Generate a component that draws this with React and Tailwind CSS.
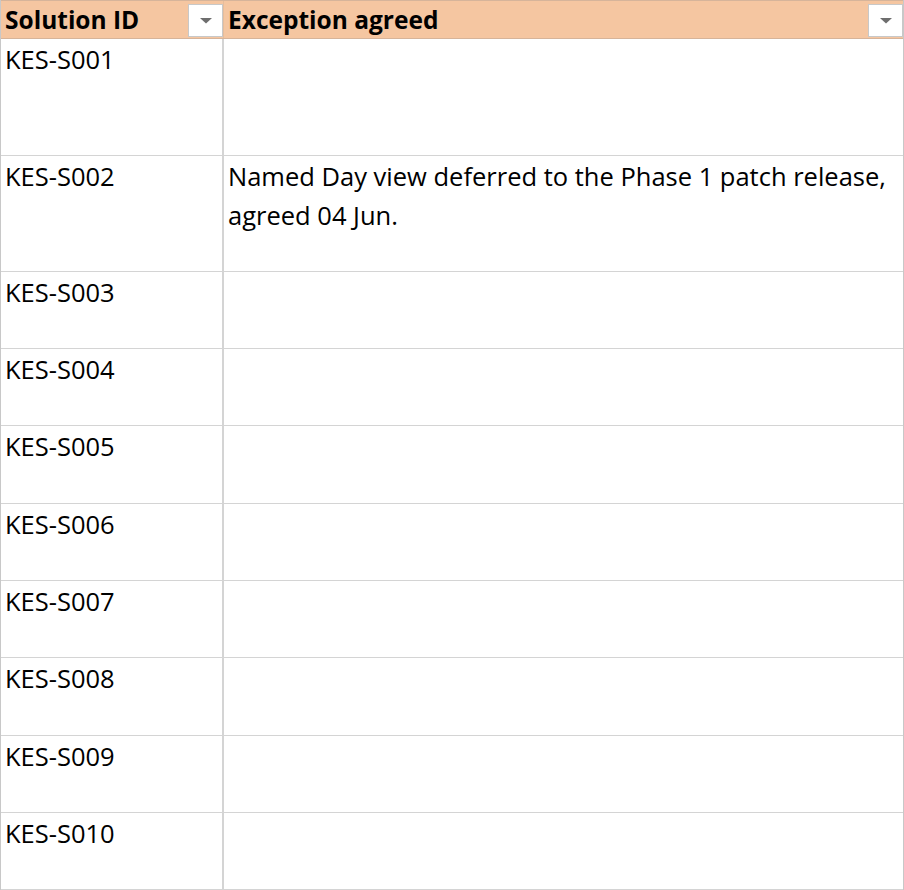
import React from "react";

const rows = [
  { id: "KES-S001", text: "", h: "h-[117px]" },
  { id: "KES-S002", text: "Named Day view deferred to the Phase 1 patch release, agreed 04 Jun.", h: "h-[116px]" },
  { id: "KES-S003", text: "", h: "h-[77px]" },
  { id: "KES-S004", text: "", h: "h-[77px]" },
  { id: "KES-S005", text: "", h: "h-[78px]" },
  { id: "KES-S006", text: "", h: "h-[77px]" },
  { id: "KES-S007", text: "", h: "h-[77px]" },
  { id: "KES-S008", text: "", h: "h-[78px]" },
  { id: "KES-S009", text: "", h: "h-[77px]" },
  { id: "KES-S010", text: "", h: "h-[77px]" },
];

function FilterButton() {
  return (
    <div className="w-[35px] h-[33px] mb-[1px] bg-white border border-[#c8c8c8] flex items-center justify-center shrink-0">
      <svg width="12" height="6" viewBox="0 0 12 6">
        <polygon points="0,0 12,0 6,5.5" fill="#6e6e6e" />
      </svg>
    </div>
  );
}

export default function App() {
  return (
    <div
      className="w-[904px] h-[890px] bg-white border-l border-r border-[#c8c8c8] text-black overflow-hidden"
      style={{ fontFamily: "'Open Sans', 'Noto Sans', sans-serif" }}
    >
      <div className="flex h-[39px] bg-[#f5c6a1] border-b border-t border-[#d6b49a]">
        <div className="w-[223px] flex items-end justify-between pl-[4px] border-r border-[#e6bd9c]">
          <span className="font-bold text-[24.5px] leading-[37px] self-center">Solution ID</span>
          <FilterButton />
        </div>
        <div className="flex-1 flex items-end justify-between pl-[4px]">
          <span className="font-bold text-[24.5px] leading-[37px] self-center">Exception agreed</span>
          <FilterButton />
        </div>
      </div>
      {rows.map((r) => (
        <div key={r.id} className={`flex border-b border-[#d4d4d4] ${r.h}`}>
          <div className="w-[223px] border-r-2 border-[#d4d4d4] pl-[4px] pt-[1px] text-[25.5px] leading-[39px]">
            {r.id}
          </div>
          <div className="flex-1 pl-[4px] pr-2 pt-[1px] text-[25.5px] leading-[39px]">
            {r.text}
          </div>
        </div>
      ))}
    </div>
  );
}
